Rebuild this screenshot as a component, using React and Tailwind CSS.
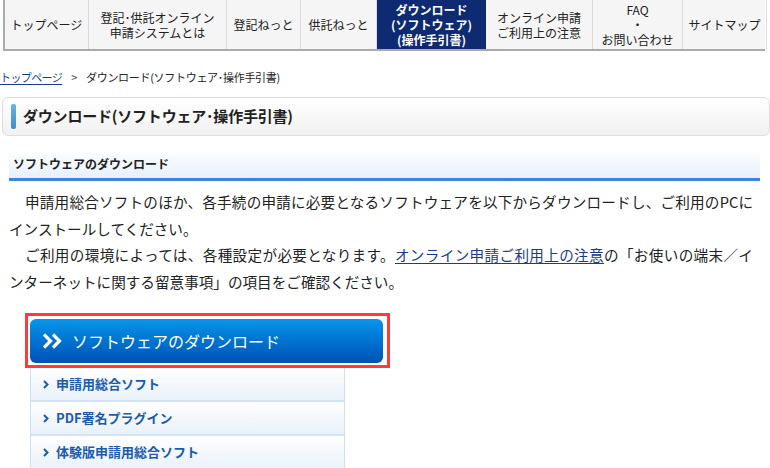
import React from 'react';

const FONT = { fontFamily: '"Noto Sans CJK JP", "Noto Sans", sans-serif' };

const NAV = [
  { w: 'w-[84px]', lines: ['トップページ'] },
  { w: 'w-[138px]', lines: ['登記･供託オンライン', '申請システムとは'] },
  { w: 'w-[74px]', lines: ['登記ねっと'] },
  { w: 'w-[76px]', lines: ['供託ねっと'] },
  { w: 'w-[109px]', lines: ['ダウンロード', '(ソフトウェア)', '(操作手引書)'], active: true },
  { w: 'w-[107px]', lines: ['オンライン申請', 'ご利用上の注意'] },
  { w: 'w-[90px]', lines: ['FAQ', '・', 'お問い合わせ'] },
  { w: 'w-[84px]', lines: ['サイトマップ'] },
];

const LINKS = ['申請用総合ソフト', 'PDF署名プラグイン', '体験版申請用総合ソフト'];

function DoubleChevron() {
  return (
    <svg width="20" height="16" viewBox="0 0 20 16">
      <path d="M1 1.5 L7.5 8 L1 14.5" fill="none" stroke="white" strokeWidth="3.2" />
      <path d="M10 1.5 L16.5 8 L10 14.5" fill="none" stroke="white" strokeWidth="3.2" />
    </svg>
  );
}

function SmallChevron() {
  return (
    <svg width="6" height="9" viewBox="0 0 6 9">
      <path d="M1 1 L4.5 4.5 L1 8" fill="none" stroke="#1a5bb0" strokeWidth="2" />
    </svg>
  );
}

export default function App() {
  return (
    <div className="w-[770px] h-[468px] bg-white overflow-hidden text-[#222]" style={FONT}>
      {/* Global nav */}
      <div className="ml-[3px] w-[762px] h-[51px] flex bg-[#f5f5f5] border-l-2 border-b-2 border-[#aaa]">
        {NAV.map((item, i) => (
          <div
            key={i}
            className={`${item.w} shrink-0 flex flex-col items-center justify-center text-[12px] leading-[15px] text-center ${
              item.active ? 'bg-[#0d2a72] text-white font-bold' : 'border-r border-[#dcdcdc]'
            }`}
          >
            {item.lines.map((l, j) => (
              <div key={j} className="h-[15px]">{l}</div>
            ))}
          </div>
        ))}
      </div>

      {/* Breadcrumb */}
      <div className="mt-[17px] text-[11px] leading-[18px] tracking-[-0.3px] flex items-center">
        <span className="text-[#1b3b8c] underline underline-offset-2 tracking-[-0.6px]">トップページ</span>
        <span className="mx-[9px] text-[#444]">&gt;</span>
        <span>ダウンロード(ソフトウェア･操作手引書)</span>
      </div>

      {/* Page title */}
      <div className="mt-[11px] ml-[2px] h-[39px] rounded-[6px] border border-[#dedede] bg-gradient-to-b from-white to-[#f1f1f1] flex items-center">
        <div className="ml-[8px] w-[5px] h-[25px] rounded-[2px] bg-gradient-to-b from-[#6db3e6] to-[#3d8bd0]" />
        <h1 className="ml-[7px] text-[15px] font-bold tracking-[-0.2px]">ダウンロード(ソフトウェア･操作手引書)</h1>
      </div>

      {/* Section heading */}
      <div className="mt-[13px] ml-[9px] w-[751px] h-[32px] bg-gradient-to-b from-white to-[#e6f0fb] border-b-[3px] border-[#3b86d6] flex items-center pl-[4px]">
        <h2 className="text-[12px] font-bold">ソフトウェアのダウンロード</h2>
      </div>

      {/* Body text */}
      <div className="mt-[8px] ml-[9px] w-[744px] text-[14.6px] leading-[26.5px] text-justify">
        <p className="indent-[16px]">
          申請用総合ソフトのほか、各手続の申請に必要となるソフトウェアを以下からダウンロードし、ご利用のPCにインストールしてください。
        </p>
        <p className="indent-[16px]">
          ご利用の環境によっては、各種設定が必要となります。
          <span className="text-[#1b3b8c] underline underline-offset-2">オンライン申請ご利用上の注意</span>
          の「お使いの端末／イ<span className="whitespace-nowrap">ンター</span>ネットに関する留意事項」の項目をご確認ください。
        </p>
      </div>

      {/* Download button */}
      <div className="mt-[18px] ml-[25px] w-[365px] h-[55px] border-[3px] border-[#ff3a3a] pt-[3px] pl-[2px]">
        <div className="w-[353px] h-[44px] rounded-[6px] bg-gradient-to-b from-[#0b95ea] to-[#0051b6] flex items-center pl-[13px] gap-[9px]">
          <DoubleChevron />
          <span className="text-white text-[16px]">ソフトウェアのダウンロード</span>
        </div>
      </div>

      {/* Sub links */}
      <div className="ml-[30px] w-[315px] border-l border-r border-[#cfe1f0]">
        {LINKS.map((t, i) => (
          <div
            key={i}
            className="h-[34px] border-b-2 border-[#d3e4f2] bg-gradient-to-b from-white to-[#e9f1fa] flex items-center pl-[12px] gap-[7px]"
          >
            <SmallChevron />
            <span className="text-[13px] font-bold text-[#1a5bb0]">{t}</span>
          </div>
        ))}
      </div>
    </div>
  );
}
